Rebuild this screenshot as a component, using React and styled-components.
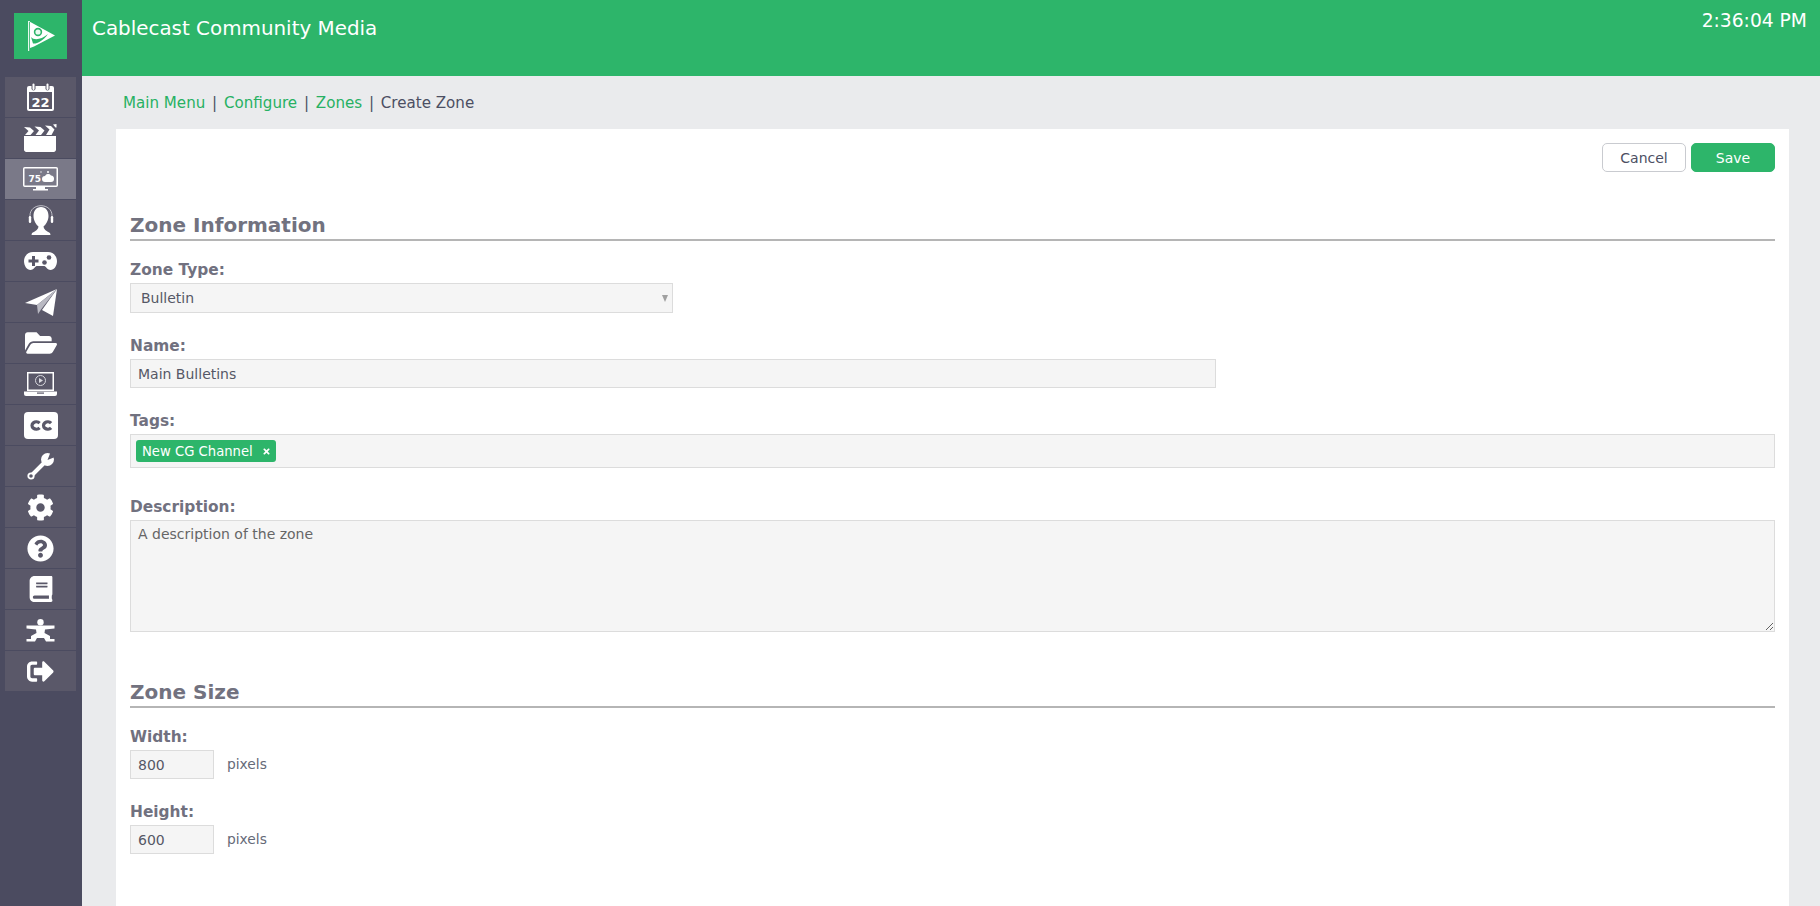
import React from "react";
import styled, { createGlobalStyle } from "styled-components";
import {
  FaBook,
  FaCog,
  FaFolderOpen,
  FaQuestionCircle,
  FaSignOutAlt,
  FaTimes,
} from "react-icons/fa";

const GlobalStyle = createGlobalStyle`
  html, body {
    margin: 0;
    height: 100%;
    overflow: hidden;
    background: #eaebed;
    font-family: "DejaVu Sans", Verdana, sans-serif;
  }
  * { box-sizing: border-box; }
`;

const Page = styled.div`
  display: flex;
  height: 100vh;
  overflow: hidden;
`;
const Sidebar = styled.nav`
  width: 82px;
  flex: none;
  background: #4b4b60;
  padding: 13px 6px 0 5px;
`;
const LogoBox = styled.div`
  width: 53px;
  height: 46px;
  margin: 0 0 18px 9px;
  background: #2db56a;
  svg { display: block; }
`;
const NavList = styled.div`
  display: flex;
  flex-direction: column;
  gap: 1px;
`;
const NavItem = styled.div`
  height: 40px;
  display: flex;
  align-items: center;
  justify-content: center;
  color: #fff;
  background: ${(props) => (props.$active ? "#7a7988" : "#5a5869")};
`;
const Main = styled.div`
  flex: 1;
  min-width: 0;
  display: flex;
  flex-direction: column;
`;
const Header = styled.header`
  height: 76px;
  flex: none;
  display: flex;
  justify-content: space-between;
  align-items: flex-start;
  padding: 17px 13px 0 10px;
  background: #2db56a;
  color: #fff;
`;
const Title = styled.div`
  font-size: 19.9px;
  line-height: 24px;
`;
const Clock = styled.div`
  font-size: 18.7px;
  line-height: 22px;
  margin-top: -7px;
`;
const Breadcrumb = styled.div`
  height: 53px;
  flex: none;
  display: flex;
  align-items: center;
  gap: 6.8px;
  padding: 0 0 0 41px;
  font-size: 15.1px;
  color: #4c4f63;
`;
const Crumb = styled.a`
  color: #27b163;
`;
const Panel = styled.main`
  flex: 1;
  margin: 0 31px 0 34px;
  padding: 14px;
  background: #fff;
`;
const Actions = styled.div`
  display: flex;
  justify-content: flex-end;
  gap: 5px;
`;
const Button = styled.button`
  height: 29px;
  width: 84px;
  padding: 0;
  border-radius: 5px;
  border: 1px solid ${(props) => (props.$primary ? "#2db56a" : "#c9cbd0")};
  background: ${(props) => (props.$primary ? "#2db56a" : "#fff")};
  color: ${(props) => (props.$primary ? "#fff" : "#4c4f63")};
  font: 14px "DejaVu Sans", Verdana, sans-serif;
`;
const SectionTitle = styled.h2`
  margin: ${(props) => props.$top}px 0 0;
  height: 30px;
  font-size: 20px;
  line-height: 28px;
  font-weight: 700;
  color: #72727f;
  border-bottom: 2px solid #b5b5b5;
`;
const Field = styled.div`
  margin-top: ${(props) => props.$top}px;
`;
const Label = styled.label`
  display: block;
  height: 18px;
  margin-bottom: 4px;
  font-size: 15.4px;
  line-height: 18px;
  font-weight: 700;
  color: #71717f;
`;
const SelectWrap = styled.div`
  position: relative;
  width: 543px;
  &::after {
    content: "";
    position: absolute;
    right: 5px;
    top: 12px;
    border-left: 3.5px solid transparent;
    border-right: 3.5px solid transparent;
    border-top: 7px solid #a0a0a0;
  }
`;
const controlStyle = `
  display: block;
  border: 1px solid #dcdcdc;
  background: #f5f5f5;
  color: #555866;
  font: 14px "DejaVu Sans", Verdana, sans-serif;
  outline: none;
`;
const Select = styled.select`
  ${controlStyle}
  appearance: none;
  width: 100%;
  height: 30px;
  padding: 0 10px;
  border-radius: 0;
`;
const TextInput = styled.input`
  ${controlStyle}
  width: ${(props) => props.$width}px;
  height: 29px;
  padding: 0 7px;
`;
const TagBox = styled.div`
  display: flex;
  align-items: center;
  height: 34px;
  padding: 0 5px;
  border: 1px solid #dcdcdc;
  background: #f5f5f5;
`;
const Tag = styled.span`
  display: flex;
  align-items: center;
  justify-content: space-between;
  width: 140px;
  height: 22px;
  padding: 0 5px 0 6px;
  border-radius: 3px;
  background: #2db56a;
  color: #fff;
  font-size: 13.2px;
`;
const TextArea = styled.textarea`
  ${controlStyle}
  width: 100%;
  height: 112px;
  padding: 5px 7px;
  color: #666;
`;
const InlineRow = styled.div`
  display: flex;
  align-items: center;
  gap: 13px;
`;
const Unit = styled.span`
  font-size: 13.8px;
  line-height: 16px;
  margin-top: -2px;
  color: #666a78;
`;

const Logo = () => (
  <svg width="53" height="46" viewBox="0 0 53 46">
    <rect x="14" y="8" width="1.2" height="30" fill="#e8f8ef" />
    <path d="M14.5 8 L41 22.5 L20 33.5 L16 35 L16 8 Z" fill="#fff" />
    <circle cx="24" cy="19" r="3.4" fill="#eafaf1" stroke="#2db56a" strokeWidth="1.6" />
    <path d="M17 24 C20 27.5 27 27 34 21 C28.5 28.5 23 31 19 30.5 Z" fill="#2db56a" />
  </svg>
);
const CalendarIcon = () => (
  <svg width="27" height="28" viewBox="0 0 27 28" fill="#fff">
    <path d="M2 3 H25 A2 2 0 0 1 27 5 V26 A2 2 0 0 1 25 28 H2 A2 2 0 0 1 0 26 V5 A2 2 0 0 1 2 3 Z M2 9 V26 H25 V9 Z" fillRule="evenodd" />
    <rect x="4.5" y="0" width="4" height="7.5" rx="2" fill="#5a5869" />
    <rect x="5.5" y="0.5" width="2" height="6.5" rx="1" />
    <rect x="18.5" y="0" width="4" height="7.5" rx="2" fill="#5a5869" />
    <rect x="19.5" y="0.5" width="2" height="6.5" rx="1" />
    <text x="13.5" y="23.5" textAnchor="middle" fontFamily="'DejaVu Sans', sans-serif" fontWeight="700" fontSize="13">22</text>
  </svg>
);
const ClapperIcon = () => (
  <svg width="33" height="28" viewBox="0 0 33 28" fill="#fff">
    <path d="M0 12 H32 V25 A2.5 2.5 0 0 1 29.5 28 H2.5 A2.5 2.5 0 0 1 0 25 Z" />
    <path d="M0 3 L6 3.5 L10 7 L6.5 11 H1 L4.5 7 Z" />
    <path d="M10.5 2.5 L16.5 3 L20.5 6.5 L17 11 H11.5 L15 6.5 Z" />
    <path d="M21 1.5 L27 2 L30.5 5.5 L27.5 11 H22 L25.5 5.5 Z" />
    <path d="M29 0.5 L32.5 0 V3.5 L31.5 3.5 Z" />
  </svg>
);
const ForecastIcon = () => (
  <svg width="35" height="24" viewBox="0 0 35 24" fill="#fff">
    <rect x="0.75" y="0.75" width="33.5" height="18.5" rx="1" fill="none" stroke="#fff" strokeWidth="1.5" />
    <rect x="13" y="20" width="9" height="2" />
    <rect x="10" y="22" width="15" height="1.5" />
    <text x="5.5" y="14.5" fontFamily="'DejaVu Sans', sans-serif" fontWeight="700" fontSize="9">75</text>
    <path d="M19 12 A3 3 0 0 1 22 9 A3.5 3.5 0 0 1 28 8.5 A3 3 0 0 1 31 12 A3 3 0 0 1 28 15 H22 A3 3 0 0 1 19 12 Z" />
    <circle cx="25" cy="5" r="1" />
    <circle cx="18" cy="5" r="0.7" />
  </svg>
);
const HeadsetIcon = () => (
  <svg width="26" height="30" viewBox="0 0 26 30" fill="#fff">
    <path d="M13 2 C18 2 20.5 6 20.5 11 C20.5 16 17.5 20 15.5 21.5 C15.5 24 18 26 22 28 L22.5 30 H3.5 L4 28 C8 26 10.5 24 10.5 21.5 C8.5 20 5.5 16 5.5 11 C5.5 6 8 2 13 2 Z" />
    <path d="M2 14 V10.5 C2 4.5 7 0.7 13 0.7 C19 0.7 24 4.5 24 10.5 V14" fill="none" stroke="#d8d8de" strokeWidth="0.8" />
    <rect x="0.8" y="11" width="2.4" height="7" rx="1.2" />
    <rect x="22.8" y="11" width="2.4" height="7" rx="1.2" />
  </svg>
);
const GamepadIcon = () => (
  <svg width="33" height="18" viewBox="0 0 33 18" fill="#fff">
    <path d="M9 0 H24 C29 0 33 4 33 9 C33 14 30 18 26.5 18 C23.5 18 22.5 15 20.5 14 H12.5 C10.5 15 9.5 18 6.5 18 C3 18 0 14 0 9 C0 4 4 0 9 0 Z" />
    <path d="M8 4 H11 V7.5 H14.5 V10.5 H11 V14 H8 V10.5 H4.5 V7.5 H8 Z" fill="#5a5869" />
    <circle cx="25" cy="5.5" r="2.3" fill="#5a5869" />
    <circle cx="20.5" cy="10.5" r="2.3" fill="#5a5869" />
  </svg>
);
const PlaneIcon = () => (
  <svg width="32" height="27" viewBox="0 0 32 27" fill="#fff">
    <path d="M0 14 L32 0 L12 16 Z" />
    <path d="M32 0 L28 27 L17 21 Z" />
    <path d="M32 0 L12 16 L13 25 L16 20.5 Z" fill="#b9b9c2" />
  </svg>
);
const LaptopIcon = () => (
  <svg width="33" height="24" viewBox="0 0 33 24" fill="#fff">
    <rect x="3.75" y="0.75" width="25.5" height="17.5" fill="none" stroke="#fff" strokeWidth="1.5" />
    <circle cx="16.5" cy="8.5" r="5" fill="none" stroke="#d8d8de" strokeWidth="1" />
    <path d="M15 6 L19 8.5 L15 11 Z" fill="#d8d8de" />
    <path d="M0 19.5 H33 V22 A2 2 0 0 1 31 24 H2 A2 2 0 0 1 0 22 Z" />
    <rect x="13" y="20.5" width="7" height="1.2" fill="#5a5869" />
  </svg>
);
const CaptionIcon = () => (
  <svg width="34" height="27" viewBox="0 0 34 27" fill="none">
    <rect width="34" height="27" rx="4" fill="#fff" />
    <path d="M15.6 11.2 A4.3 3.6 0 1 0 15.6 15.8" stroke="#5a5869" strokeWidth="3.2" />
    <path d="M27.1 11.2 A4.3 3.6 0 1 0 27.1 15.8" stroke="#5a5869" strokeWidth="3.2" />
  </svg>
);
const WrenchIcon = () => (
  <svg width="28" height="28" viewBox="0 0 28 28" fill="none">
    <path d="M5 23 L17 11" stroke="#fff" strokeWidth="4" />
    <circle cx="4" cy="24" r="2.7" fill="#5a5869" stroke="#fff" strokeWidth="1.8" />
    <circle cx="20.5" cy="7.5" r="6.5" fill="#fff" />
    <path d="M20.5 8 L24 -1 L29.5 4.5 L20.5 8 Z" fill="#5a5869" />
  </svg>
);
const YogaIcon = () => (
  <svg width="29" height="23" viewBox="0 0 29 23" fill="#fff">
    <circle cx="14.5" cy="3.2" r="3.2" />
    <path d="M0.5 6.5 H28.5 V9.5 L19 10.5 L18.5 14 L24 17 V20 H28.5 V22.5 H20 L18 19 H11 L9 22.5 H0.5 V20 H5 V17 L10.5 14 L10 10.5 L0.5 9.5 Z" />
  </svg>
);

const navIcons = [
  <CalendarIcon />,
  <ClapperIcon />,
  <ForecastIcon />,
  <HeadsetIcon />,
  <GamepadIcon />,
  <PlaneIcon />,
  <FaFolderOpen size={32} />,
  <LaptopIcon />,
  <CaptionIcon />,
  <WrenchIcon />,
  <FaCog size={27} />,
  <FaQuestionCircle size={27} />,
  <FaBook size={26} />,
  <YogaIcon />,
  <FaSignOutAlt size={27} />,
];

const App = () => {
  return (
    <Page>
      <GlobalStyle />
      <Sidebar>
        <LogoBox>
          <Logo />
        </LogoBox>
        <NavList>
          {navIcons.map((icon, i) => (
            <NavItem key={i} $active={i === 2}>
              {icon}
            </NavItem>
          ))}
        </NavList>
      </Sidebar>
      <Main>
        <Header>
          <Title>Cablecast Community Media</Title>
          <Clock>2:36:04 PM</Clock>
        </Header>
        <Breadcrumb>
          <Crumb>Main Menu</Crumb>|<Crumb>Configure</Crumb>|<Crumb>Zones</Crumb>|<span>Create Zone</span>
        </Breadcrumb>
        <Panel>
          <Actions>
            <Button>Cancel</Button>
            <Button $primary>Save</Button>
          </Actions>

          <SectionTitle $top={39}>Zone Information</SectionTitle>
          <Field $top={20}>
            <Label>Zone Type:</Label>
            <SelectWrap>
              <Select defaultValue="Bulletin">
                <option>Bulletin</option>
              </Select>
            </SelectWrap>
          </Field>
          <Field $top={24}>
            <Label>Name:</Label>
            <TextInput $width={1086} defaultValue="Main Bulletins" />
          </Field>
          <Field $top={24}>
            <Label>Tags:</Label>
            <TagBox>
              <Tag>
                New CG Channel
                <FaTimes size={9} />
              </Tag>
            </TagBox>
          </Field>
          <Field $top={30}>
            <Label>Description:</Label>
            <TextArea defaultValue="A description of the zone" />
          </Field>

          <SectionTitle $top={46}>Zone Size</SectionTitle>
          <Field $top={20}>
            <Label>Width:</Label>
            <InlineRow>
              <TextInput $width={84} defaultValue="800" />
              <Unit>pixels</Unit>
            </InlineRow>
          </Field>
          <Field $top={24}>
            <Label>Height:</Label>
            <InlineRow>
              <TextInput $width={84} defaultValue="600" />
              <Unit>pixels</Unit>
            </InlineRow>
          </Field>
        </Panel>
      </Main>
    </Page>
  );
};

export default App;
